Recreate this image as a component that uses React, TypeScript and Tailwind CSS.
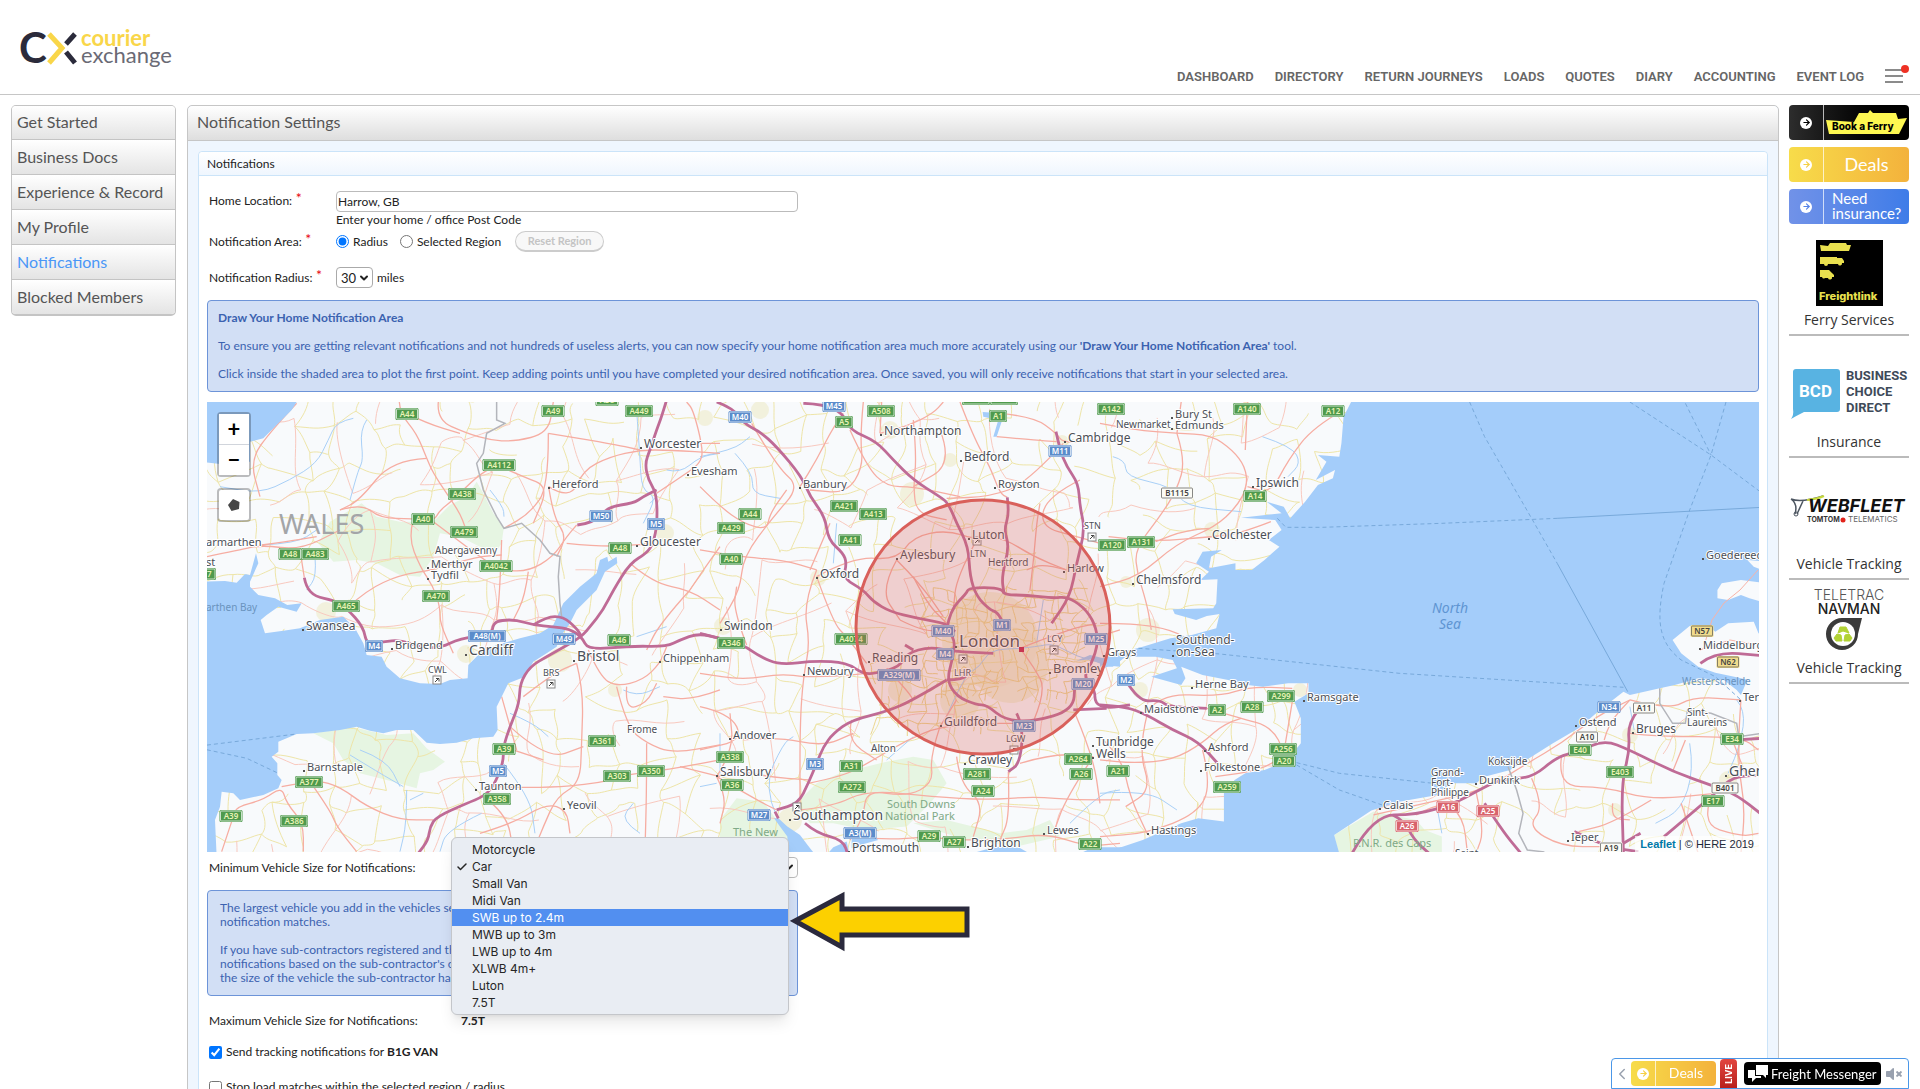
import { ArrowRight, Check, ChevronDown, ChevronLeft } from "lucide-react"
import { FaVolumeMute } from "react-icons/fa"

const NAV = ["DASHBOARD", "DIRECTORY", "RETURN JOURNEYS", "LOADS", "QUOTES", "DIARY", "ACCOUNTING", "EVENT LOG"]

const SIDE_LINKS = ["Get Started", "Business Docs", "Experience & Record", "My Profile", "Notifications", "Blocked Members"]

const VEHICLES = [
  "Motorcycle",
  "Car",
  "Small Van",
  "Midi Van",
  "SWB up to 2.4m",
  "MWB up to 3m",
  "LWB up to 4m",
  "XLWB 4m+",
  "Luton",
  "7.5T",
]

// The map is drawn from three tiles, each with its own drawing scale
const WEST = "matrix(.3333 0 0 .3333 200 390)"
const MID = "matrix(.3333 0 0 .3333 700 390)"
const EAST = "matrix(.4273 0 0 .3333 1100 390)"

type Tile = { at: string; paths: string[] }

const SEA: Tile[] = [
  {
    at: WEST,
    paths: [
      "M0 30L290 36 275 60 245 90 215 120 190 145 150 155 150 215 60 222 0 215Z",
      "M0 575L75 573 110 578 135 552 100 545 150 555 168 490 175 520 150 575 150 590 175 615 225 625 262 645 305 640 290 665 235 650 200 675 182 690 195 730 250 722 300 715 360 690 430 680 465 715 490 760 500 795 545 800 560 830 600 865 660 880 720 882 750 870 803 865 805 825 840 790 890 765 960 745 1020 730 1060 705 1090 640 1140 590 1190 550 1200 510 1222 500 1225 515 1250 500 1252 520 1215 545 1190 600 1130 660 1110 700 1085 735 1070 770 1040 790 1000 815 975 860 925 880 905 920 890 950 893 1020 880 1040 820 1045 770 1058 720 1062 680 1058 640 1020 590 1020 550 1030 510 1022 470 1010 420 1020 340 1030 290 1032 235 1055 235 1085 215 1100 232 1120 232 1155 245 1170 235 1195 190 1215 120 1230 100 1210 65 1205 60 1250 45 1290 50 1400 0 1400Z",
    ],
  },
  {
    at: MID,
    paths: [
      "M222 1285L235 1285 262 1310 300 1335 325 1368 350 1400 265 1400 262 1340Z",
      "M375 1400L400 1372 440 1355 450 1400Z",
      "M455 1345L520 1338 535 1350 480 1365 455 1375Z",
      "M780 1400L860 1378 900 1370 960 1374 1005 1400Z",
      "M1120 1400L1180 1372 1280 1372 1280 1400Z",
      "M848 66L880 68 908 78 905 95 890 140 880 140 895 90 850 80Z",
      "M1130 812L1170 795 1210 805 1260 800 1260 830 1210 825 1170 808Z",
    ],
  },
  {
    at: EAST,
    paths: [
      "M590 30L570 80 565 160 560 200 510 195 530 215 505 270 550 240 545 265 510 285 480 335 445 385 430 350 390 335 425 370 330 383 410 390 425 420 395 450 420 470 385 510 355 540 317 540 317 520 255 535 260 500 285 480 240 485 225 520 255 545 235 570 275 568 272 640 265 655 170 658 175 672 225 690 250 678 280 672 272 715 215 735 165 745 100 770 40 790 0 808 0 830 30 830 60 800 130 800 170 810 180 835 120 860 190 885 200 865 190 830 240 855 300 870 345 885 380 890 440 880 488 880 488 910 455 935 470 985 470 1060 435 1115 385 1140 340 1150 315 1170 290 1210 290 1295 230 1285 190 1300 100 1350 30 1380 0 1400 562 1400 548 1335 590 1300 635 1262 700 1235 790 1215 820 1180 880 1180 900 1160 960 1140 1010 1100 1060 1060 1120 1015 1170 960 1225 905 1240 915 1310 895 1345 885 1400 865 1460 870 1490 900 1500 915 1515 870 1560 860 1560 30Z",
    ],
  },
]

const ISLANDS: Tile[] = [
  {
    at: EAST,
    paths: [
      "M1445 600L1455 580 1500 570 1560 580 1560 640 1520 625 1500 615 1470 630 1445 625Z",
      "M1515 510L1560 515 1560 545 1530 530Z",
      "M1340 750L1380 708 1420 705 1440 725 1470 700 1530 695 1541 730 1560 735 1560 870 1535 875 1490 862 1440 848 1400 830 1360 790Z",
    ],
  },
]

const PARKS: Tile[] = [
  {
    at: WEST,
    paths: [
      "M355 460L390 395 485 340 530 380 600 395 700 395 750 345 800 320 830 275 850 310 880 370 912 410 905 460 885 490 860 480 780 440 720 430 700 500 660 560 600 555 530 520 470 510 400 515Z",
      "M340 1030L460 1012 560 1035 640 1030 680 1075 735 1115 700 1140 660 1150 650 1195 560 1170 480 1150 430 1110 400 1060Z",
    ],
  },
  {
    at: MID,
    paths: [
      "M60 1290L110 1225 190 1235 230 1290 280 1340 265 1400 60 1400Z",
      "M290 1240L350 1180 420 1150 560 1115 640 1100 700 1110 740 1180 690 1240 620 1310 500 1320 400 1300 330 1300Z",
      "M640 1300L740 1290 900 1330 980 1320 1050 1290 1080 1340 950 1370 800 1350Z",
    ],
  },
  { at: EAST, paths: ["M548 1335L640 1265 740 1290 760 1320 800 1340 800 1400 560 1400Z"] },
]

const TOWNS = [
  [665, 533, 9], [560, 660, 12], [466, 654, 9], [326, 612, 10], [723, 626, 9], [890, 430, 9], [912, 494, 12],
  [818, 578, 8], [790, 820, 12], [1062, 442, 7], [1212, 530, 8], [1126, 582, 6], [1148, 630, 12], [950, 460, 7],
  [615, 690, 7], [990, 640, 48], [1010, 665, 38], [960, 700, 20], [900, 690, 12], [1140, 690, 8], [1300, 690, 7],
  [760, 410, 9], [705, 418, 8], [1728, 780, 9], [1630, 735, 8], [1615, 810, 7],
]

const MOTORWAYS: Tile[] = [
  {
    at: WEST,
    paths: [
      "M1400 30L1385 80 1370 120 1350 180 1335 220 1345 270 1370 310 1372 400 1360 460 1340 490 1290 520 1240 600 1210 660 1170 710 1145 740 1085 775 1040 800 990 830 960 880 958 940 930 1010 910 1070 910 1120 880 1190 850 1220 800 1240 710 1280 690 1310 685 1350 655 1390",
      "M1132 405L1180 400 1225 350 1300 340 1330 320 1370 300",
      "M313 563L318 590 345 620 400 630 440 655 490 710 500 765 550 755 600 750 660 770 720 775 780 745 875 735 880 700 905 690 950 690 1000 705 1060 710 1110 718 1145 740 1165 780 1290 768 1400 770 1440 750 1495 730 1560 745",
      "M1000 705L1040 680 1090 680 1130 715 1145 740",
    ],
  },
  {
    at: MID,
    paths: [
      "M50 36L100 55 130 100 180 125 230 170 305 260 330 320 375 380 385 450 430 490 440 520 430 565 490 600 520 635 570 665 650 685 740 700 765 725",
      "M310 40L370 42 430 70 450 120 530 155 580 210 640 270 720 320 745 340 770 400 805 470 810 560 830 620 870 660 890 665 905 690",
      "M922 322L928 370 912 420 928 470 905 560 912 610",
      "M740 720L750 660 800 610 805 595 860 592 905 597 915 615 980 615 1060 625 1100 620 1150 650 1185 700 1195 760 1175 820 1150 860 1185 900 1185 940 1220 955 1290 945",
      "M740 720L765 740 760 800 740 870 770 920 830 945 860 945 915 990 1000 995 1120 960 1125 880",
      "M1120 960L1220 955M740 870L790 870 810 840",
      "M1068 125L1080 180 1100 230 1135 280 1140 350 1155 420 1130 520 1110 620 1055 700",
      "M740 870L640 930 560 965 455 990 400 1030 370 1070 350 1120 325 1180 295 1240 230 1260",
      "M0 730L60 745 130 765 180 800 240 825 345 812 440 818 490 852 530 850 600 830 620 790 690 770 760 785 880 790M615 765L640 780",
      "M225 1265L235 1285M315 1300L350 1330 430 1350 445 1400",
      "M950 970L970 1010 960 1120 925 1145",
    ],
  },
  {
    at: EAST,
    paths: [
      "M0 945L60 950 110 975 170 1020 230 1055 275 1120",
      "M60 870L90 935 140 930 160 950 250 955",
      "M590 1390L640 1275 740 1275 830 1240 880 1205 940 1165 1010 1165 1070 1100 1120 1085 1180 1050 1240 1080 1340 1145 1440 1190 1490 1215 1550 1275",
      "M1260 960L1235 1000 1240 1080 1220 1180 1225 1390M1320 1340L1440 1210 1480 1160 1550 1155",
      "M685 1275L710 1290 735 1350 770 1390M900 1240L940 1320 985 1390M1405 820L1440 785 1550 797M1490 1050L1550 1045",
      "M1110 1325L1180 1370 1260 1385M1225 1360L1265 1330",
    ],
  },
]

const MAIN_ROADS: Tile[] = [
  {
    at: WEST,
    paths: [
      "M598 36L600 70 650 130 680 205 700 250 740 310 780 370 795 410",
      "M290 40L215 120 150 210 180 320M680 205L575 210 480 330 420 360",
      "M420 360L485 340 540 385 640 385 700 395 720 360 760 330 830 260 880 230",
      "M715 36L710 90 800 130 870 150 940 155 1045 130 1060 36",
      "M620 70L680 100 780 130M1045 130L1046 290 990 370 912 415",
      "M1046 290L1110 330 1150 240 1230 200 1320 180 1410 180 1560 190",
      "M890 225L970 260 1046 290 1000 400M1045 130L1230 160 1320 180",
      "M21 500L120 480 185 465 300 480 420 420M185 465L260 455 350 440",
      "M300 480L313 563M440 655L500 600 600 555 700 540 830 500 905 495",
      "M640 390L625 440 660 530 700 590 720 650 720 700 760 790",
      "M700 395L760 440 840 500 900 540 985 545 1060 500 1100 440 1130 405",
      "M905 450L900 600 890 690M985 545L975 620 940 690",
      "M1046 290L1060 380 1100 440 1070 500M1100 460L1200 470 1310 465 1360 460",
      "M1370 310L1460 250 1500 220 1510 180 1480 60 1460 36",
      "M1290 520L1360 580 1470 600 1560 660M1470 600L1510 540 1560 470M1470 600L1380 700 1340 780",
      "M1165 780L1200 860 1250 890 1330 870 1380 820 1400 770",
      "M1130 820L1150 900 1145 1060 1140 1180 1070 1220 1030 1310 1000 1385",
      "M1250 890L1280 1010 1340 1060 1420 1090 1560 1065M1340 1060L1340 1200 1335 1385",
      "M1280 890L1275 960 1340 940 1370 880M930 1010L1040 1110 1150 1070",
      "M970 920L1060 850 1130 820M905 920L950 1080M910 1070L1030 1110",
      "M245 1190L350 1170 420 1190 500 1250 600 1290 700 1290",
      "M65 1385L100 1280 110 1250 190 1230 245 1190 260 1240 310 1300 310 1385",
      "M330 1175L390 1260 410 1310 470 1385M880 1190L1020 1195 1200 1180 1300 1150 1400 1140 1560 1110",
      "M850 1220L920 1270 940 1385M840 1330L940 1300 1040 1240 1100 1260 1110 1330",
      "M1560 1160L1440 1130M1560 900L1480 930 1390 920M1560 160L1505 160",
    ],
  },
  {
    at: MID,
    paths: [
      "M0 290L60 350 130 400 200 420 210 370 260 300M0 480L110 500 250 510 350 540",
      "M155 100L230 230 300 290 220 380 130 500 120 600 60 700",
      "M350 540L310 640 330 760 310 860 300 1000 300 1240M390 400L330 540",
      "M430 70L400 110 350 210 300 290M450 120L500 230 560 290 640 290 780 320",
      "M540 130L620 110 700 70 730 36M640 90L650 200 640 290 650 370 740 390",
      "M780 36L820 140 870 230 900 310 922 322M540 130L545 36",
      "M900 70L1000 80 1070 130 1090 160 1200 150M890 140L1000 150 1070 155",
      "M1090 160L980 280 870 320 740 325M720 120L760 220 640 290",
      "M490 36L480 140 490 230 440 310 330 300M590 510L540 600 600 690",
      "M350 560L460 500 590 510 640 440 740 420 830 450 905 440 1000 500 1100 540",
      "M590 510L660 580 730 680M350 560L400 700 440 740 500 820",
      "M140 765L100 660 110 590M310 860L250 850 130 870 0 850M310 860L410 860 500 850",
      "M0 950L90 970 130 1050 0 1080M130 1050L230 1040 370 1070 460 1030",
      "M50 1160L110 1140 200 1160 325 1170M50 1160L100 1080 90 970",
      "M50 1160L80 1220 60 1300M50 1160L170 1230 230 1260",
      "M325 1180L430 1160 520 1110 620 1050 720 1010 850 1000 950 1000",
      "M455 990L440 1050 530 1110M720 1010L690 1100 700 1180 620 1220 500 1200 490 1280 450 1350",
      "M300 1260L400 1250 500 1200 700 1220 860 1230 1000 1220 1130 1230 1260 1230",
      "M460 1340L550 1350 690 1340 760 1350 900 1350 1040 1330 1160 1370 1260 1360",
      "M925 1145L930 1280 900 1350M770 1100L780 1180 850 1240 820 1340",
      "M960 1120L1060 1090 1180 1100M1180 1100L1100 1220 1060 1330M1125 970L1180 1100 1200 1240",
      "M1000 995L1040 900 1000 830 960 775M830 450L770 560 760 660M990 600L1000 520 1010 400 1020 340",
      "M1140 270L1040 320 1020 410 1130 440 1200 460M1100 540L1030 520 980 540",
      "M1200 460L1260 450M1195 740L1260 720M640 560L680 640 740 700M960 775L1100 720 1190 700",
      "M560 835L620 900 640 930M600 690L680 730 740 710M770 930L720 1010",
    ],
  },
  {
    at: EAST,
    paths: [
      "M0 100L80 120 180 130 260 135 310 180 340 230 345 290 320 350 270 410 180 460 90 560 0 590",
      "M345 36L340 180M180 130L190 36M180 130L200 210 180 300 140 380 80 480 90 560",
      "M570 60L500 110 440 210 400 310 345 290M90 560L110 640 120 720M0 700L80 700 170 720 220 760",
      "M400 395L330 430 260 440 130 455 20 440M255 415L200 420 130 455",
      "M100 975L140 910 280 920 350 890 450 895M250 955L330 985 400 1010 435 1090 380 1140 270 1160",
      "M330 985L290 1000 240 1060 170 1110 80 1120 0 1110M450 935L430 1090",
      "M240 1080L260 1180 230 1270 110 1330 0 1340M0 1040L50 1100 70 1220 110 1330",
      "M110 975L90 1080 120 1200 60 1250M740 1275L800 1230 850 1280 860 1390",
      "M640 1275L760 1240 900 1200 1000 1120 1080 1060 1160 980 1240 930",
      "M1180 1050L1190 1000 1240 930M1240 1030L1300 1040 1500 1040 1541 1080M1240 930L1330 960 1390 920 1500 930",
      "M880 1205L900 1320 880 1390M1010 1165L1040 1250 1000 1310 1080 1370 1180 1370",
      "M1080 1100L1070 1190 1180 1190 1290 1230 1440 1210M1290 1230L1200 1300 1120 1325",
      "M1340 1145L1370 1050M1360 1240L1400 1390M1440 1190L1400 1300 1500 1340 1541 1330M1480 1050L1510 1150",
      "M1500 930L1490 1100 1510 1250 1500 1390M1200 1240L1195 1285 1240 1290",
    ],
  },
]

const RIVERS: Tile[] = [
  {
    at: WEST,
    paths: [
      "M500 90L480 120 490 210 475 240 450 330M460 85L410 95 385 150 350 220 270 270 180 310 60 290",
      "M185 465L290 460 350 420M1310 60L1320 200 1325 300 1370 320 1330 400M1370 320L1350 340",
      "M1400 240L1440 250 1500 200 1560 190M345 500L350 560 320 600M480 1080L560 1110 600 1190M450 1095L540 1150 610 1190",
      "M620 1200L620 1300 600 1385M670 1210L630 1230M930 970L1000 1000 1045 1040M910 1120L990 1220 1005 1330",
      "M1270 900L1310 920 1380 890M1310 740L1400 710M870 300L910 350 912 380M845 1270L740 1320 720 1385M1320 1330L1260 1290 1300 1240",
    ],
  },
  {
    at: MID,
    paths: [
      "M0 200L100 180 150 140M105 190L160 250 155 310 240 325M740 980L790 860 840 830 870 780 960 775",
      "M960 775L1010 770 1060 760 1130 800 1210 820M1030 630L1010 760M230 1280L190 1190 250 1060 280 1040M0 1190L50 1180",
      "M560 1110L640 1040M1110 1300L1200 1210 1260 1200M60 1160L60 1030M410 400L400 520",
    ],
  },
  {
    at: EAST,
    paths: [
      "M380 140L450 170 470 220 440 260M30 200L60 210 60 260 170 290 200 350 330 365M0 840L30 820",
      "M1490 930L1510 960 1500 1060 1470 1150M1380 1060L1390 1140 1360 1260 1300 1300M790 1260L800 1330M0 1210L110 1200 180 1260",
      "M1240 950L1250 1020M1541 680L1500 690 1450 690M1480 640L1500 670",
    ],
  },
]

const BORDERS: Tile[] = [
  {
    at: WEST,
    paths: [
      "M890 36L890 90 915 100 860 130 850 190 830 220 850 300 890 380 912 415 965 400 1020 450 1050 490 1080 500 1075 560 1080 640 1085 680",
    ],
  },
  {
    at: EAST,
    paths: [
      "M955 1130L975 1200 990 1270 980 1330 1000 1380 1040 1386",
      "M1310 895L1310 940 1340 1000 1370 1000 1375 960 1430 970 1490 1000 1495 1040 1550 1030",
    ],
  },
]

const FERRIES: Tile[] = [
  { at: WEST, paths: ["M0 1068L290 1032", "M0 1075L140 1105 235 1150"] },
  {
    at: EAST,
    paths: [
      "M865 36L900 140 1010 385 1070 520",
      "M415 385L435 412 520 412 800 400 1070 385",
      "M1240 36L1430 195 1550 310",
      "M1465 36L1430 195 1380 360 1320 580C1300 700 1310 760 1360 810L1440 860 1500 930",
      "M1370 40L1430 195",
      "M90 775L280 792 700 850 1225 892",
      "M460 1118L560 1150 780 1180M460 1125L560 1200 660 1245",
    ],
  },
]

const SEA_LANES: Tile[] = [{ at: EAST, paths: ["M1070 520L1235 905", "M1070 385L1550 352"] }]

type Place = [string, number, number, number]

const PLACES: Place[] = [
  ["Worcester", 644, 448, 12], ["Evesham", 691, 475, 11], ["Hereford", 552, 488, 11], ["Abergavenny", 435, 554, 10],
  ["Merthyr", 431, 568, 11], ["Tydfil", 431, 579, 11], ["armarthen", 206, 546, 11], ["st", 206, 566, 11],
  ["Swansea", 306, 630, 12], ["Bridgend", 395, 649, 11], ["Cardiff", 469, 655, 14], ["Bristol", 577, 661, 14],
  ["Gloucester", 640, 546, 12], ["Chippenham", 663, 662, 11], ["Frome", 627, 733, 10], ["Barnstaple", 307, 771, 11],
  ["Taunton", 479, 790, 11], ["Yeovil", 567, 809, 11], ["BRS", 543, 676, 9], ["CWL", 428, 673, 9],
  ["Northampton", 884, 435, 12], ["Bedford", 964, 461, 12], ["Banbury", 803, 488, 11], ["Royston", 998, 488, 11],
  ["Cambridge", 1068, 442, 12], ["Oxford", 820, 578, 12], ["Aylesbury", 900, 559, 12], ["Luton", 972, 539, 12],
  ["LTN", 970, 557, 9], ["Hertford", 988, 566, 10], ["Harlow", 1067, 572, 11], ["STN", 1084, 529, 9],
  ["Swindon", 724, 630, 12], ["Newbury", 807, 675, 11], ["Reading", 872, 662, 12], ["London", 959, 647, 17],
  ["LCY", 1047, 642, 9], ["LHR", 954, 676, 9], ["Bromley", 1053, 673, 13], ["Guildford", 944, 726, 12],
  ["Andover", 733, 739, 11], ["Alton", 871, 752, 10], ["Salisbury", 720, 776, 12], ["Southampton", 793, 820, 14],
  ["Portsmouth", 852, 852, 12], ["LGW", 1006, 742, 9], ["Crawley", 968, 764, 12], ["Lewes", 1047, 834, 11],
  ["Brighton", 971, 847, 12], ["Newmarket", 1116, 428, 10], ["Bury St", 1175, 418, 11], ["Edmunds", 1175, 429, 11],
  ["Ipswich", 1256, 487, 12], ["Colchester", 1212, 539, 12], ["Chelmsford", 1136, 584, 12], ["Southend-", 1176, 644, 12],
  ["on-Sea", 1176, 656, 12], ["Grays", 1107, 656, 11], ["Herne Bay", 1195, 688, 11], ["Ramsgate", 1307, 701, 11],
  ["Maidstone", 1144, 713, 11], ["Tunbridge", 1096, 746, 12], ["Wells", 1096, 758, 12], ["Ashford", 1208, 751, 11],
  ["Folkestone", 1204, 771, 11], ["Hastings", 1151, 834, 11], ["Goedereede", 1706, 559, 11], ["Middelburg", 1703, 649, 11],
  ["Terneuzen", 1743, 701, 11], ["Sint-", 1687, 716, 10], ["Laureins", 1687, 726, 10], ["Bruges", 1636, 733, 12],
  ["Ostend", 1579, 726, 11], ["Koksijde", 1488, 765, 10], ["Grand-", 1431, 776, 10], ["Fort-", 1431, 786, 10],
  ["Philippe", 1431, 796, 10], ["Dunkirk", 1479, 784, 11], ["Calais", 1383, 809, 11], ["Ghent", 1729, 776, 14],
  ["Ieper", 1571, 841, 11], ["Saint", 1455, 857, 10],
]

const SHIELD_STYLE = {
  a: { fill: "#4f9a4d", text: "#e9f3b5", edge: "#ffffff" },
  m: { fill: "#5b8ccb", text: "#ffffff", edge: "#ffffff" },
  r: { fill: "#d9636c", text: "#ffffff", edge: "#ffffff" },
  w: { fill: "#fbfbf6", text: "#444444", edge: "#555555" },
  y: { fill: "#f1dc8c", text: "#444444", edge: "#555555" },
}

type Shield = [string, number, number, keyof typeof SHIELD_STYLE]

const SHIELDS: Shield[] = [
  ["A44", 407, 414, "a"], ["A49", 553, 411, "a"], ["A449", 639, 411, "a"], ["A38", 607, 400, "a"], ["A4112", 499, 465, "a"],
  ["A438", 462, 494, "a"], ["A40", 423, 519, "a"], ["A479", 464, 532, "a"], ["A48", 290, 554, "a"], ["A483", 315, 554, "a"],
  ["A4042", 496, 566, "a"], ["A470", 436, 596, "a"], ["A465", 346, 606, "a"], ["M4", 374, 646, "m"], ["A48(M)", 487, 636, "m"],
  ["M49", 564, 639, "m"], ["A46", 619, 640, "a"], ["A48", 620, 548, "a"], ["M50", 601, 516, "m"], ["M5", 656, 524, "m"],
  ["A39", 504, 749, "a"], ["M5", 498, 771, "m"], ["A361", 602, 741, "a"], ["A303", 617, 776, "a"], ["A350", 651, 771, "a"],
  ["A358", 497, 799, "a"], ["A377", 309, 782, "a"], ["A39", 231, 816, "a"], ["A386", 294, 821, "a"], ["A477", 202, 574, "a"],
  ["M40", 740, 417, "m"], ["M45", 834, 406, "m"], ["A5", 844, 422, "a"], ["A508", 881, 411, "a"], ["A1", 998, 416, "a"],
  ["A605", 976, 399, "a"], ["A141", 1004, 399, "a"], ["A142", 1111, 409, "a"], ["M11", 1060, 451, "m"], ["A421", 844, 506, "a"],
  ["A413", 873, 514, "a"], ["A44", 750, 514, "a"], ["A429", 731, 528, "a"], ["A40", 731, 559, "a"], ["A41", 850, 540, "a"],
  ["A120", 1112, 545, "a"], ["A346", 731, 643, "a"], ["A4074", 851, 639, "a"], ["M40", 943, 631, "m"], ["M1", 1002, 625, "m"],
  ["M4", 945, 654, "m"], ["A329(M)", 899, 675, "m"], ["M25", 1096, 639, "m"], ["M20", 1083, 684, "m"], ["M23", 1024, 726, "m"],
  ["M2", 1126, 680, "m"], ["M3", 815, 764, "m"], ["A31", 851, 766, "a"], ["A272", 852, 787, "a"], ["A338", 730, 757, "a"],
  ["A36", 732, 785, "a"], ["M27", 759, 815, "m"], ["A3(M)", 860, 833, "m"], ["A29", 929, 836, "a"], ["A27", 954, 842, "a"],
  ["A22", 1090, 844, "a"], ["A281", 977, 774, "a"], ["A24", 983, 791, "a"], ["A264", 1078, 759, "a"], ["A26", 1081, 774, "a"],
  ["A21", 1118, 771, "a"], ["A140", 1247, 409, "a"], ["A12", 1333, 411, "a"], ["B1115", 1177, 493, "w"], ["A14", 1255, 496, "a"],
  ["A131", 1141, 542, "a"], ["A299", 1281, 696, "a"], ["A2", 1217, 710, "a"], ["A28", 1252, 707, "a"], ["A256", 1283, 749, "a"],
  ["A20", 1284, 761, "a"], ["A259", 1227, 787, "a"], ["N57", 1702, 631, "y"], ["N62", 1728, 662, "y"], ["N34", 1609, 707, "m"],
  ["A11", 1644, 708, "w"], ["A10", 1587, 737, "w"], ["E40", 1580, 750, "a"], ["E34", 1732, 739, "a"], ["E403", 1620, 772, "a"],
  ["B401", 1725, 788, "w"], ["E17", 1713, 801, "a"], ["A16", 1448, 807, "r"], ["A25", 1488, 811, "r"], ["A26", 1407, 826, "r"],
  ["A19", 1611, 848, "w"],
]

const AIRPORTS = [[437, 680], [551, 684], [977, 541], [1092, 537], [963, 659], [1054, 650], [1014, 750], [797, 807]]

// Local roads: a web of bent segments between jittered grid nodes
function localRoads(x0: number, y0: number, x1: number, y1: number, step: number, chance: number) {
  let seed = 7
  const rnd = () => {
    seed = (seed * 16807) % 2147483647
    return seed / 2147483647 - 0.5
  }
  const cols = Math.ceil((x1 - x0) / step)
  const rows = Math.ceil((y1 - y0) / step)
  const node: number[][][] = []
  for (let r = 0; r <= rows; r++) {
    node.push([])
    for (let c = 0; c <= cols; c++) {
      node[r].push([x0 + c * step + rnd() * step * 0.8, y0 + r * step + rnd() * step * 0.8])
    }
  }
  const link = (a: number[], b: number[]) => {
    const at = (t: number) => {
      const x = a[0] + (b[0] - a[0]) * t + rnd() * step * 0.35
      const y = a[1] + (b[1] - a[1]) * t + rnd() * step * 0.35
      return `${x.toFixed(1)} ${y.toFixed(1)}`
    }
    return `M${a[0].toFixed(1)} ${a[1].toFixed(1)}C${at(0.33)} ${at(0.67)} ${b[0].toFixed(1)} ${b[1].toFixed(1)}`
  }
  let d = ""
  for (let r = 0; r < rows; r++) {
    for (let c = 0; c < cols; c++) {
      if (rnd() + 0.5 < chance) d += link(node[r][c], node[r][c + 1])
      if (rnd() + 0.5 < chance) d += link(node[r][c], node[r + 1][c])
    }
  }
  return d
}

const COUNTRY_ROADS = localRoads(200, 395, 1770, 860, 26, 0.62)
const RED_ROADS = localRoads(190, 380, 1780, 870, 48, 0.4)
const LONDON_ROADS = localRoads(925, 590, 1080, 700, 10, 0.7)
const SUBURB_ROADS = localRoads(875, 660, 985, 730, 12, 0.7)

// Rounds a polyline by running curves through the middles of its segments
function smooth(d: string) {
  return d
    .split("M")
    .filter(Boolean)
    .map((line) => {
      const n = line.split(/[L ]/).map(Number)
      let out = `M${n[0]} ${n[1]}`
      for (let i = 2; i < n.length - 2; i += 2) {
        out += `Q${n[i]} ${n[i + 1]} ${(n[i] + n[i + 2]) / 2} ${(n[i + 1] + n[i + 3]) / 2}`
      }
      return out + `L${n[n.length - 2]} ${n[n.length - 1]}`
    })
    .join("")
}

function Layer({ tiles, curved, ...rest }: { tiles: Tile[]; curved?: boolean } & React.SVGProps<SVGGElement>) {
  return (
    <g {...rest}>
      {tiles.map((t, i) => (
        <g key={i} transform={t.at}>
          {t.paths.map((d) => (
            <path key={d} d={curved ? smooth(d) : d} vectorEffect="non-scaling-stroke" />
          ))}
        </g>
      ))}
    </g>
  )
}

function MapCanvas() {
  return (
    <svg
      viewBox="207 402 1552 450"
      preserveAspectRatio="xMidYMid slice"
      className="block h-[450px] w-full bg-[#f8fafc] font-['Noto_Sans',sans-serif]"
      role="img"
      aria-label="Notification area map"
    >
      <Layer tiles={PARKS} fill="#e6f5e2" />
      {TOWNS.map(([x, y, r], i) => (
        <circle key={i} cx={x} cy={y} r={r} fill="#f0ecd0" opacity={0.7} />
      ))}
      <path d={COUNTRY_ROADS} fill="none" stroke="#eee5a8" />
      <path d={RED_ROADS} fill="none" stroke="#f9c9bf" />
      <path d={LONDON_ROADS + SUBURB_ROADS} fill="none" stroke="#ecd58c" />
      <Layer tiles={RIVERS} curved fill="none" stroke="#a9d0f7" strokeWidth={1} />
      <Layer tiles={MAIN_ROADS} curved fill="none" stroke="#f6ada2" strokeWidth={1.3} />
      <Layer tiles={SEA} fill="#a4cdfa" />
      <Layer tiles={ISLANDS} fill="#f8fafc" />
      <path d="M1703 649L1712 620 1724 603 1740 590 1758 570M1700 650L1730 640 1759 645" fill="none" stroke="#f7b3a8" />
      <Layer tiles={BORDERS} fill="none" stroke="#b3b5bb" strokeWidth={1.5} />
      <Layer tiles={FERRIES} fill="none" stroke="#78a9da" strokeDasharray="4 3" />
      <Layer tiles={SEA_LANES} fill="none" stroke="#78a9da" />
      <Layer tiles={MOTORWAYS} curved fill="none" stroke="#bf6b96" strokeWidth={2.8} />

      {AIRPORTS.map(([x, y]) => (
        <g key={`${x}`} transform={`translate(${x - 4} ${y - 4})`}>
          <rect width={8} height={8} fill="#fff" stroke="#888" />
          <path d="M2 6L6 2M3 2.500H6V5.500" stroke="#444" fill="none" />
        </g>
      ))}

      {SHIELDS.map(([label, x, y, kind], i) => {
        const s = SHIELD_STYLE[kind]
        const w = label.length * 5 + 6
        return (
          <g key={i}>
            <rect x={x - w / 2 - 1} y={y - 6} width={w + 2} height={12} rx={1.5} fill={s.fill} />
            <rect x={x - w / 2} y={y - 5} width={w} height={10} rx={1} fill={s.fill} stroke={s.edge} strokeWidth={0.7} />
            <text x={x} y={y + 3} textAnchor="middle" fontSize={8} fontWeight={600} fill={s.text}>
              {label}
            </text>
          </g>
        )
      })}

      <g fill="#4b4f57" stroke="#fff" strokeWidth={2} paintOrder="stroke" strokeLinejoin="round">
        {PLACES.map(([name, x, y, size]) => (
          <text key={name} x={x} y={y} fontSize={size}>
            {name}
          </text>
        ))}
      </g>
      <g fill="#555">
        {PLACES.filter((p) => p[3] > 10).map(([name, x, y]) => (
          <rect key={name} x={x - 4} y={y - 1} width={2} height={2} />
        ))}
      </g>
      <rect x={1019} y={647} width={5} height={5} fill="#c2244e" />
      <text x={279} y={534} fontSize={27} fill="#a3a5a8">WALES</text>
      <g fill="#6a93bd">
        <text x={206} y={611} fontSize={10}>arthen Bay</text>
        <text x={1682} y={685} fontSize={10}>Westerschelde</text>
      </g>
      <g fill="#5f95d2" fontStyle="italic" fontSize={14} textAnchor="middle">
        <text x={1450} y={613}>North</text>
        <text x={1450} y={629}>Sea</text>
      </g>
      <g fill="#7fa987" fontSize={11}>
        <text x={887} y={808}>South Downs</text>
        <text x={885} y={820}>National Park</text>
        <text x={733} y={836}>The New</text>
        <text x={1353} y={847}>P.N.R. des Caps</text>
      </g>

      <circle cx={983} cy={627} r={127} fill="#d9605b" fillOpacity={0.28} stroke="#d9605b" strokeWidth={3} />
    </svg>
  )
}

function MapPanel() {
  return (
    <div className="relative mt-[10px] overflow-hidden">
      <MapCanvas />
      <div className="absolute top-[10px] left-[10px] flex flex-col gap-[11px]">
        <div className="flex flex-col rounded border-2 border-black/25 bg-clip-padding">
          <button type="button" aria-label="Zoom in" className="h-[31px] w-[30px] border-b border-gray-300 bg-white text-[22px] leading-7 font-bold text-black">
            +
          </button>
          <button type="button" aria-label="Zoom out" className="h-[30px] w-[30px] bg-white text-[22px] leading-7 font-bold text-black">
            −
          </button>
        </div>
        <button type="button" aria-label="Draw a polygon" className="flex h-[34px] w-[34px] items-center justify-center rounded border-2 border-black/25 bg-white bg-clip-padding">
          <svg viewBox="0 0 12 12" className="h-3 w-3">
            <path d="M5 0L11.500 3 11 10 3.500 12 0 6Z" fill="#464646" />
          </svg>
        </button>
      </div>
      <div className="absolute right-0 bottom-0 bg-white/70 px-[5px] font-['Liberation_Sans',sans-serif] text-[11px] leading-4 text-gray-800">
        <a href="#leaflet" className="font-bold text-[#0078a8]">Leaflet</a> | © HERE 2019
      </div>
    </div>
  )
}

function Logo() {
  return (
    <a href="#home" aria-label="Courier Exchange" className="block h-[44px] w-[160px]">
      <svg viewBox="0 0 160 44" className="h-full w-full font-['Lato',sans-serif]">
        <text x={-1} y={36} fontSize={42} fontWeight={700} fill="#2b2b3b">C</text>
        <path d="M29 7L42 21 29 36" fill="none" stroke="#f9d649" strokeWidth={5} />
        <path d="M55 7L46 17M46 25L55 36" fill="none" stroke="#2b2b3b" strokeWidth={5} />
        <text x={61} y={19} fontSize={22} fontWeight={700} fill="#f9d649">courier</text>
        <text x={61} y={36} fontSize={22} fill="#6a6a75">exchange</text>
      </svg>
    </a>
  )
}

function Header() {
  return (
    <header className="flex h-[95px] items-end justify-between border-b border-[#c6c6c6] pr-[11px] pl-5">
      <div className="self-start pt-[27px]">
        <Logo />
      </div>
      <nav className="flex items-center gap-[21px] pb-[7px] font-['Roboto',sans-serif] text-[13px] leading-5 font-semibold text-[#666]">
        {NAV.map((n) => (
          <a key={n} href="#nav">{n}</a>
        ))}
        <button aria-label="Menu" className="relative h-5 w-6">
          <svg viewBox="0 0 24 20" className="h-5 w-6">
            <path d="M0 3H18M0 9H18M0 15H18" stroke="#666" strokeWidth={1.500} />
          </svg>
          <span className="absolute -top-[2px] right-0 h-2 w-2 rounded-full bg-[#ee3124]" />
        </button>
      </nav>
    </header>
  )
}

function Sidebar() {
  return (
    <nav className="mr-px w-[165px] shrink-0 self-start overflow-hidden rounded-[5px] border border-b-2 border-[#c4c4c4]">
      {SIDE_LINKS.map((label) => (
        <a
          key={label}
          href="#section"
          className={
            "flex h-[35px] items-center border-b border-[#c4c4c4] bg-linear-to-b from-white to-[#e4e4e4] pb-px pl-[5px] text-base first:h-[34px] last:h-[34px] last:border-b-0 " +
            (label === "Notifications" ? "text-[#4a97f7]" : "text-[#555]")
          }
        >
          {label}
        </a>
      ))}
    </nav>
  )
}

function Star() {
  return <span className="relative -top-[2px] text-sm leading-none text-red-600"> *</span>
}

function VehicleSelect() {
  return (
    <div className="relative">
      <select
        id="min-size"
        defaultValue="Car"
        className="block h-[21px] w-[347px] appearance-none rounded border border-[#bbb] bg-white pl-1 text-xs"
      >
        {VEHICLES.map((v) => (
          <option key={v}>{v}</option>
        ))}
      </select>
      <ChevronDown className="absolute top-1 right-[3px] h-3 w-3" strokeWidth={4} />
      <ul
        role="listbox"
        aria-label="Vehicle sizes"
        className="absolute -top-5 left-0 z-10 w-[338px] rounded-md border border-[#c4c6ca] bg-[#e9edf3] py-[3px] font-['Inter',sans-serif] text-xs leading-[17px] text-[#262626] shadow-lg"
      >
        {VEHICLES.map((v) => (
          <li
            key={v}
            role="option"
            aria-selected={v === "Car"}
            className={"flex h-[17px] items-center " + (v.startsWith("SWB") ? "bg-[#528ff0] text-white" : "")}
          >
            <span className="flex w-[20px] justify-center">
              {v === "Car" && <Check className="h-3 w-3" strokeWidth={3} />}
            </span>
            {v}
          </li>
        ))}
      </ul>
      <svg viewBox="0 0 180 64" className="absolute top-8 left-[339px] z-20 h-16 w-[180px]" aria-hidden="true">
        <path d="M5 32L52 7V20H177V46H52V58Z" fill="#fcd000" stroke="#2b2a3d" strokeWidth={5} />
      </svg>
    </div>
  )
}

function SettingsForm() {
  return (
    <form className="px-2 pt-[15px] text-xs leading-[14px] text-[#222]">
      <div className="grid grid-cols-[129px_1fr] items-start">
        <label htmlFor="home" className="pt-[2px] pl-[2px]">Home Location:<Star /></label>
        <div className="flex flex-col gap-px">
          <input id="home" defaultValue="Harrow, GB" className="h-[21px] w-[462px] rounded border border-[#bbb] pl-px" />
          <span>Enter your home / office Post Code</span>
        </div>
      </div>

      <div className="mt-1 grid h-[21px] grid-cols-[129px_1fr] items-center">
        <span className="pl-[2px]">Notification Area:<Star /></span>
        <div className="flex items-center">
          <label className="flex items-center gap-1">
            <input type="radio" name="area" defaultChecked className="h-[13px] w-[13px]" /> Radius
          </label>
          <label className="ml-3 flex items-center gap-1">
            <input type="radio" name="area" className="h-[13px] w-[13px]" /> Selected Region
          </label>
          <button type="button" disabled className="ml-[14px] h-[21px] w-[89px] rounded-full border border-b-2 border-[#ccc] bg-[#f8f8f8] text-[11px] leading-4 font-bold text-[#c4c4c4]">
            Reset Region
          </button>
        </div>
      </div>

      <div className="mt-[15px] grid h-[21px] grid-cols-[129px_1fr] items-center">
        <label htmlFor="radius" className="pl-[2px]">Notification Radius:<Star /></label>
        <div className="flex items-center gap-1">
          <span className="relative">
            <select id="radius" defaultValue="30" className="block h-[21px] w-[37px] appearance-none rounded border border-[#aaa] bg-white pl-1 text-[13px]">
              <option>30</option>
              <option>50</option>
            </select>
            <ChevronDown className="absolute top-[5px] right-[3px] h-3 w-3" strokeWidth={4} />
          </span>
          miles
        </div>
      </div>

      <div className="mt-3 flex h-[92px] flex-col justify-center gap-[14px] rounded border border-[#6d94d8] bg-[#d2dff5] pl-[10px] text-[#3b62b0]">
        <h3 className="font-bold">Draw Your Home Notification Area</h3>
        <p>
          To ensure you are getting relevant notifications and not hundreds of useless alerts, you can now specify your home
          notification area much more accurately using our <b>'Draw Your Home Notification Area'</b> tool.
        </p>
        <p>
          Click inside the shaded area to plot the first point. Keep adding points until you have completed your desired
          notification area. Once saved, you will only receive notifications that start in your selected area.
        </p>
      </div>

      <MapPanel />

      <div className="mt-[5px] flex w-[591px] items-center justify-between">
        <label htmlFor="min-size" className="pl-[2px]">Minimum Vehicle Size for Notifications:</label>
        <VehicleSelect />
      </div>

      <div className="mt-3 h-[106px] w-[591px] overflow-hidden rounded border border-[#6d94d8] bg-[#d2dff5] pt-[10px] pl-3 whitespace-nowrap text-[#3b62b0]">
        <p>The largest vehicle you add in the vehicles section will be used for your</p>
        <p>notification matches.</p>
        <p className="mt-[14px]">If you have sub-contractors registered and they are using the app, you</p>
        <p>notifications based on the sub-contractor's current location and</p>
        <p>the size of the vehicle the sub-contractor has registered.</p>
      </div>

      <div className="mt-[18px] flex">
        <span className="w-[254px] pl-[2px]">Maximum Vehicle Size for Notifications:</span>
        <b>7.5T</b>
      </div>

      <label className="mt-[17px] flex items-center gap-1 pl-[2px]">
        <input type="checkbox" defaultChecked className="h-[13px] w-[13px]" />
        <span>Send tracking notifications for <b>B1G VAN</b></span>
      </label>
      <label className="mt-[21px] flex items-center gap-1 pb-10 pl-[2px]">
        <input type="checkbox" className="h-[13px] w-[13px]" />
        Stop load matches within the selected region / radius
      </label>
    </form>
  )
}

function ArrowDot({ color }: { color: string }) {
  return (
    <span className="flex h-3 w-3 items-center justify-center rounded-full bg-white">
      <ArrowRight className={"h-[9px] w-[9px] " + color} strokeWidth={3} />
    </span>
  )
}

const adButton = "flex h-[35px] w-full items-stretch overflow-hidden rounded text-white"
const adArrow = "flex w-[35px] shrink-0 items-center justify-center border-r border-white/70"

function Promo({ caption, box, children }: { caption: string; box: string; children: React.ReactNode }) {
  return (
    <a href="#promo" className={"flex flex-col items-center justify-end border-b-2 border-[#bbb] pb-1 font-['Open_Sans',sans-serif] text-sm leading-5 text-[#333] " + box}>
      {children}
      <span className="mt-1">{caption}</span>
    </a>
  )
}

function AdRail() {
  return (
    <aside className="w-[120px] shrink-0">
      <div className="flex flex-col gap-[7px]">
        <a href="#ferry" className={adButton + " bg-linear-to-r from-[#2d2d2d] to-black"}>
          <span className={adArrow}><ArrowDot color="text-black" /></span>
          <svg viewBox="0 0 85 35" className="h-[35px] w-[85px] font-['Inter',sans-serif]">
            <path d="M2 15L30 17 35 8H44L46 5 49 8H72L74 14 83 13 75 29H5Z" fill="#fdf751" />
            <text x={8} y={25} fontSize={10} fontWeight={800} fill="#000">Book a Ferry</text>
          </svg>
        </a>
        <a href="#deals" className={adButton + " bg-linear-to-r from-[#f7dc4a] to-[#f3b23c]"}>
          <span className={adArrow}><ArrowDot color="text-[#f5cf45]" /></span>
          <span className="flex grow items-center justify-center pb-[2px] text-lg">Deals</span>
        </a>
        <a href="#insurance" className={adButton + " bg-linear-to-r from-[#7192e8] to-[#3e7ce8]"}>
          <span className={adArrow}><ArrowDot color="text-[#5583e8]" /></span>
          <span className="flex grow items-center pb-[2px] pl-2 text-[15px] leading-[15px]">Need<br />insurance?</span>
        </a>
      </div>

      <Promo caption="Ferry Services" box="h-[112px]">
        <svg viewBox="0 0 67 66" className="h-[66px] w-[67px] font-['Inter',sans-serif]">
          <rect width={67} height={66} fill="#000" />
          <g fill="#e9e04f">
            <path d="M4 5L12 6 14 3H30L31 5H35L33 11H5Z" />
            <path d="M4 17H21V18H26L28 21V23H26A2 2 0 0 1 22 24H12A2 2 0 0 1 8 24H4ZM4 30H13L16 33 18 35V37H16A2 2 0 0 1 12 38H9A2 2 0 0 1 6 37H4Z" />
            <text x={3} y={60} fontSize={11} fontWeight={800}>Freightlink</text>
          </g>
        </svg>
      </Promo>
      <Promo caption="Insurance" box="h-[122px]">
        <svg viewBox="0 0 118 51" className="mb-2 h-[51px] w-[118px] font-['Roboto',sans-serif] font-bold">
          <path d="M6 0H47Q50 0 50 3V40Q50 43 47 43H14Q6 47 1 50 4 46 3 40V3Q3 0 6 0Z" fill="#58b3e2" />
          <text x={9} y={28} fontSize={17} fill="#fff">BCD</text>
          <g fontSize={13} fill="#3e4a59">
            <text x={56} y={11}>BUSINESS</text>
            <text x={56} y={27}>CHOICE</text>
            <text x={56} y={43}>DIRECT</text>
          </g>
        </svg>
      </Promo>
      <Promo caption="Vehicle Tracking" box="h-[122px]">
        <svg viewBox="0 0 120 32" className="mb-6 h-8 w-[120px]">
          <path d="M2 5Q12 9 34 2M2 5Q9 10 6 20M14 7L8 20" fill="none" stroke="#4c5560" strokeWidth={1.500} />
          <path d="M18 6Q28 5 35 2" fill="none" stroke="#c5d83b" strokeWidth={2} />
          <circle cx={7} cy={20} r={2} fill="none" stroke="#4c5560" />
          <g className="font-['Inter',sans-serif] font-bold">
            <text x={19} y={18} fontSize={18} fontStyle="italic" fill="#111">WEBFLEET</text>
            <text x={18} y={28} fontSize={7} fill="#333">TOMTOM</text>
            <circle cx={54} cy={26} r={2.500} fill="#e2231a" />
            <text x={59} y={28} fontSize={8} fontWeight={400} fill="#666">TELEMATICS</text>
          </g>
        </svg>
      </Promo>
      <Promo caption="Vehicle Tracking" box="h-[104px]">
        <svg viewBox="0 0 90 66" className="h-[66px] w-[90px] font-['Inter',sans-serif]">
          <g fontSize={14} textAnchor="middle">
            <text x={45} y={12} fill="#555" fontWeight={300}>TELETRAC</text>
            <text x={45} y={26} fontWeight={500} fill="#222">NAVMAN</text>
          </g>
          <path d="M38 30H58L54 46A16 16 0 1 1 38 30Z" fill="#3b3b3b" />
          <circle cx={39} cy={46} r={12} fill="#fff" />
          <path d="M36 39H42L45 45 39 43 34 45ZM30 50L33 46 37 47 38 53 32 53ZM48 50L45 46 41 47 40 53 46 53Z" fill="#b2d235" stroke="#b2d235" strokeLinejoin="round" />
        </svg>
      </Promo>
    </aside>
  )
}

function MessengerBar() {
  return (
    <div className="fixed right-[11px] bottom-0 z-30 flex h-[31px] w-[298px] items-center rounded-t border border-[#4b97e8] bg-white pl-px">
      <button aria-label="Previous"><ChevronLeft className="h-[18px] w-[18px] text-gray-400" /></button>
      <a href="#deals" className="flex h-[25px] w-[85px] items-stretch rounded-sm bg-linear-to-r from-[#f7dc4a] to-[#f3b23c] text-white">
        <span className="flex w-[25px] items-center justify-center border-r border-white/70">
          <ArrowDot color="text-[#f5cf45]" />
        </span>
        <span className="flex grow items-center justify-center pb-[2px] text-sm">Deals</span>
      </a>
      <span className="ml-1 flex h-full w-[17px] items-center justify-center rounded-t-sm bg-linear-to-b from-[#e2453f] to-[#b81f1c]">
        <span className="font-['Inter',sans-serif] text-[9px] leading-3 font-bold text-white [writing-mode:sideways-lr]">LIVE</span>
      </span>
      <button className="ml-[7px] flex h-[23px] w-[137px] items-center gap-[3px] rounded-sm bg-black pl-1 text-[13px] leading-4 text-white">
        <svg viewBox="0 0 20 17" className="h-[17px] w-5 shrink-0">
          <path d="M8 0H20V10H18V13L15 10H8Z" fill="#fff" />
          <path d="M0 5H7V11H13V13H8L4 17V13H0Z" fill="#fff" />
        </svg>
        Freight Messenger
      </button>
      <button aria-label="Mute" className="ml-[5px]"><FaVolumeMute className="h-4 w-4 text-gray-400" /></button>
    </div>
  )
}

export default function App() {
  return (
    <div className="h-screen overflow-x-hidden overflow-y-auto bg-white font-['Lato',sans-serif] [scrollbar-width:none]">
      <Header />
      <div className="flex gap-[10px] px-[11px] pt-[10px]">
        <Sidebar />
        <main className="min-w-0 grow rounded-t-[5px] border border-[#c6c6c6] bg-[#eff6fe]">
          <h1 className="flex h-[35px] items-center rounded-t-[5px] border-b border-[#c6c6c6] bg-linear-to-b from-white to-[#dedede] pb-[2px] pl-[9px] text-base text-[#555]">
            Notification Settings
          </h1>
          <section className="mx-[10px] mt-[10px] rounded-t border border-[#cbe4f9] bg-white">
            <h2 className="flex h-6 items-center rounded-t border-b border-[#cbe4f9] bg-linear-to-b from-white to-[#eff6fe] pl-2 text-xs text-[#222]">
              Notifications
            </h2>
            <SettingsForm />
          </section>
        </main>
        <AdRail />
      </div>
      <MessengerBar />
    </div>
  )
}
